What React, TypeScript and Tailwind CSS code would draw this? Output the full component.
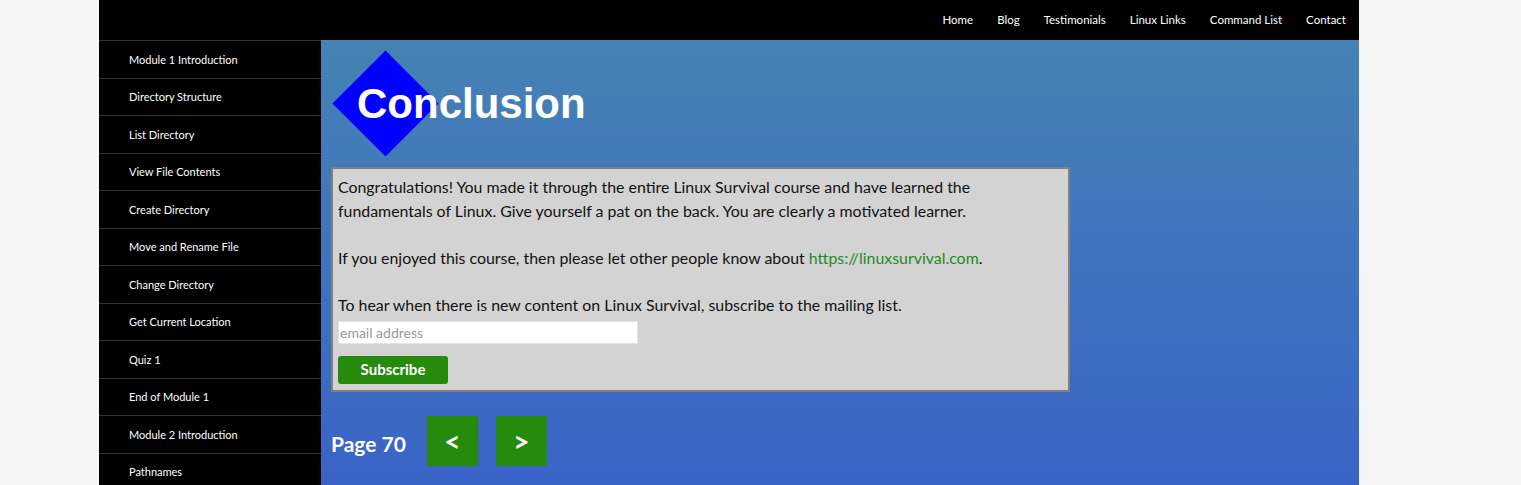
import React from "react";

const navLinks = ["Home", "Blog", "Testimonials", "Linux Links", "Command List", "Contact"];

const lessons = [
  "Module 1 Introduction",
  "Directory Structure",
  "List Directory",
  "View File Contents",
  "Create Directory",
  "Move and Rename File",
  "Change Directory",
  "Get Current Location",
  "Quiz 1",
  "End of Module 1",
  "Module 2 Introduction",
  "Pathnames",
];

export default function App() {
  return (
    <div className="min-h-screen bg-[#f5f5f5] font-['Lato',sans-serif]">
      <div className="w-[1260px] ml-[99px] overflow-hidden h-[485px]">
        {/* Top nav */}
        <header className="h-10 bg-black flex items-center justify-end pr-[1px]">
          <nav className="flex items-center">
            {navLinks.map((link) => (
              <a key={link} href="#" className="px-[12px] text-[11.5px] text-white">
                {link}
              </a>
            ))}
          </nav>
        </header>

        <div className="flex">
          {/* Sidebar */}
          <aside className="w-[222px] shrink-0 bg-black">
            {lessons.map((lesson) => (
              <a
                key={lesson}
                href="#"
                className="flex items-center h-[37.5px] border-t border-[#333] pl-[30px] pt-[1px] text-[11px] text-white"
              >
                {lesson}
              </a>
            ))}
          </aside>

          {/* Main */}
          <main className="flex-1 h-[445px] bg-gradient-to-b from-[#4682b4] to-[#3a63c7] pl-[10px]">
            <div className="relative h-[127px] flex items-center">
              <div className="absolute left-[17px] top-[26px] w-[75px] h-[75px] bg-[#0000ff] rotate-45" />
              <h1 className="relative ml-[26px] text-[42px] font-bold text-white font-['Liberation_Sans',Arial,sans-serif]">
                Conclusion
              </h1>
            </div>

            <div className="w-[739px] bg-[#d3d3d3] border-2 border-[#808080] px-[5px] pt-[6px] pb-[6px] text-[15.9px] leading-[23.5px] text-[#111]">
              <p>
                Congratulations! You made it through the entire Linux Survival course and have learned the
                fundamentals of Linux. Give yourself a pat on the back. You are clearly a motivated learner.
                <br />
                <br />
                If you enjoyed this course, then please let other people know about{" "}
                <a href="#" className="text-[#228b22]">https://linuxsurvival.com</a>.
                <br />
                <br />
                To hear when there is new content on Linux Survival, subscribe to the mailing list.
              </p>
              <input
                type="text"
                placeholder="email address"
                className="mt-[5px] block w-[300px] h-[23px] bg-white border border-[#e5e5e5] px-[1px] text-[14px] placeholder:text-[#999] outline-none"
              />
              <button className="mt-[12px] block w-[110px] h-[28px] rounded-[3px] bg-[#268a0c] text-white font-bold text-[15px]">
                Subscribe
              </button>
            </div>

            <div className="flex items-center mt-[24px]">
              <span className="text-[21px] font-bold text-white mt-[5px]">Page 70</span>
              <button className="ml-[21px] w-[51px] h-[50px] rounded-[1px] bg-[#268a0c] text-white font-bold text-[28px] leading-none">
                &lt;
              </button>
              <button className="ml-[18px] w-[51px] h-[50px] rounded-[1px] bg-[#268a0c] text-white font-bold text-[28px] leading-none">
                &gt;
              </button>
            </div>
          </main>
        </div>
      </div>
    </div>
  );
}
